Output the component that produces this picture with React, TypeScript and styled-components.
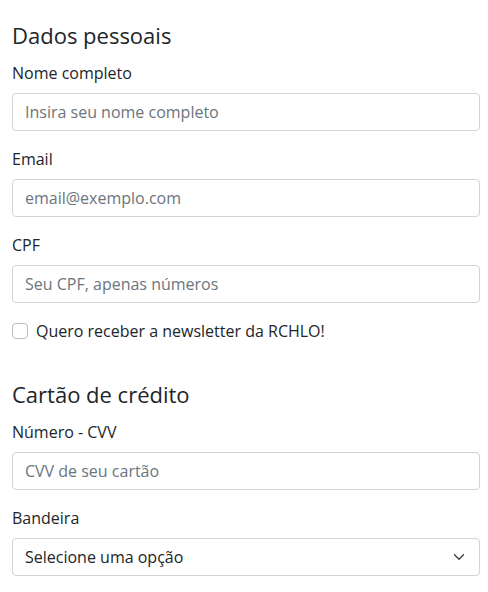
import React from 'react';
import styled, { createGlobalStyle } from 'styled-components';

const GlobalStyle = createGlobalStyle`
  body {
    margin: 0;
    background: #fff;
    font-family: "Open Sans", "Noto Sans", sans-serif;
    color: #212529;
  }
`;

const Form = styled.form`
  display: flex;
  flex-direction: column;
  padding: 22px 8px 0 12px;
`;

const Section = styled.section<{ $gap?: number }>`
  display: flex;
  flex-direction: column;
  margin-bottom: ${({ $gap }) => $gap ?? 0}px;
`;

const Title = styled.h2`
  margin: 0 0 13px;
  font-size: 22px;
  font-weight: 400;
  line-height: 26px;
`;

const Field = styled.div`
  display: flex;
  flex-direction: column;
  gap: 8px;
  margin-bottom: 16px;
`;

const Label = styled.label`
  font-size: 16px;
  line-height: 24px;
`;

const Input = styled.input`
  box-sizing: border-box;
  width: 100%;
  height: 38px;
  padding: 0 12px;
  border: 1px solid #ced4da;
  border-radius: 4px;
  font-family: inherit;
  font-size: 16px;
  color: #212529;
  outline: none;

  &::placeholder {
    color: #6c757d;
  }
`;

const SelectWrap = styled.div`
  position: relative;
`;

const Select = styled.select`
  box-sizing: border-box;
  width: 100%;
  height: 38px;
  padding: 0 36px 0 12px;
  border: 1px solid #ced4da;
  border-radius: 4px;
  background: #fff;
  font-family: inherit;
  font-size: 16px;
  color: #212529;
  appearance: none;
  outline: none;
`;

const Chevron = styled.svg`
  position: absolute;
  right: 15px;
  top: 50%;
  width: 12px;
  height: 12px;
  transform: translateY(-50%);
  pointer-events: none;
`;

const CheckRow = styled.label`
  display: flex;
  align-items: center;
  gap: 8px;
  font-size: 16px;
  line-height: 24px;
`;

const Box = styled.input`
  box-sizing: border-box;
  width: 16px;
  height: 16px;
  margin: 0;
  border: 1px solid #b9bec4;
  border-radius: 4px;
  appearance: none;
  background: #fff;
`;

export default function App() {
  return (
    <>
      <GlobalStyle />
      <Form>
        <Section $gap={38}>
          <Title>Dados pessoais</Title>
          <Field>
            <Label>Nome completo</Label>
            <Input placeholder="Insira seu nome completo" />
          </Field>
          <Field>
            <Label>Email</Label>
            <Input placeholder="email@exemplo.com" />
          </Field>
          <Field>
            <Label>CPF</Label>
            <Input placeholder="Seu CPF, apenas números" />
          </Field>
          <CheckRow>
            <Box type="checkbox" />
            Quero receber a newsletter da RCHLO!
          </CheckRow>
        </Section>
        <Section>
          <Title>Cartão de crédito</Title>
          <Field>
            <Label>Número - CVV</Label>
            <Input placeholder="CVV de seu cartão" />
          </Field>
          <Field>
            <Label>Bandeira</Label>
            <SelectWrap>
              <Select defaultValue="">
                <option value="">Selecione uma opção</option>
                <option value="visa">Visa</option>
                <option value="master">Mastercard</option>
              </Select>
              <Chevron viewBox="0 0 16 16">
                <path d="M2 5l6 6 6-6" fill="none" stroke="#343a40" strokeWidth="1.7" strokeLinecap="round" strokeLinejoin="round" />
              </Chevron>
            </SelectWrap>
          </Field>
        </Section>
      </Form>
    </>
  );
}
